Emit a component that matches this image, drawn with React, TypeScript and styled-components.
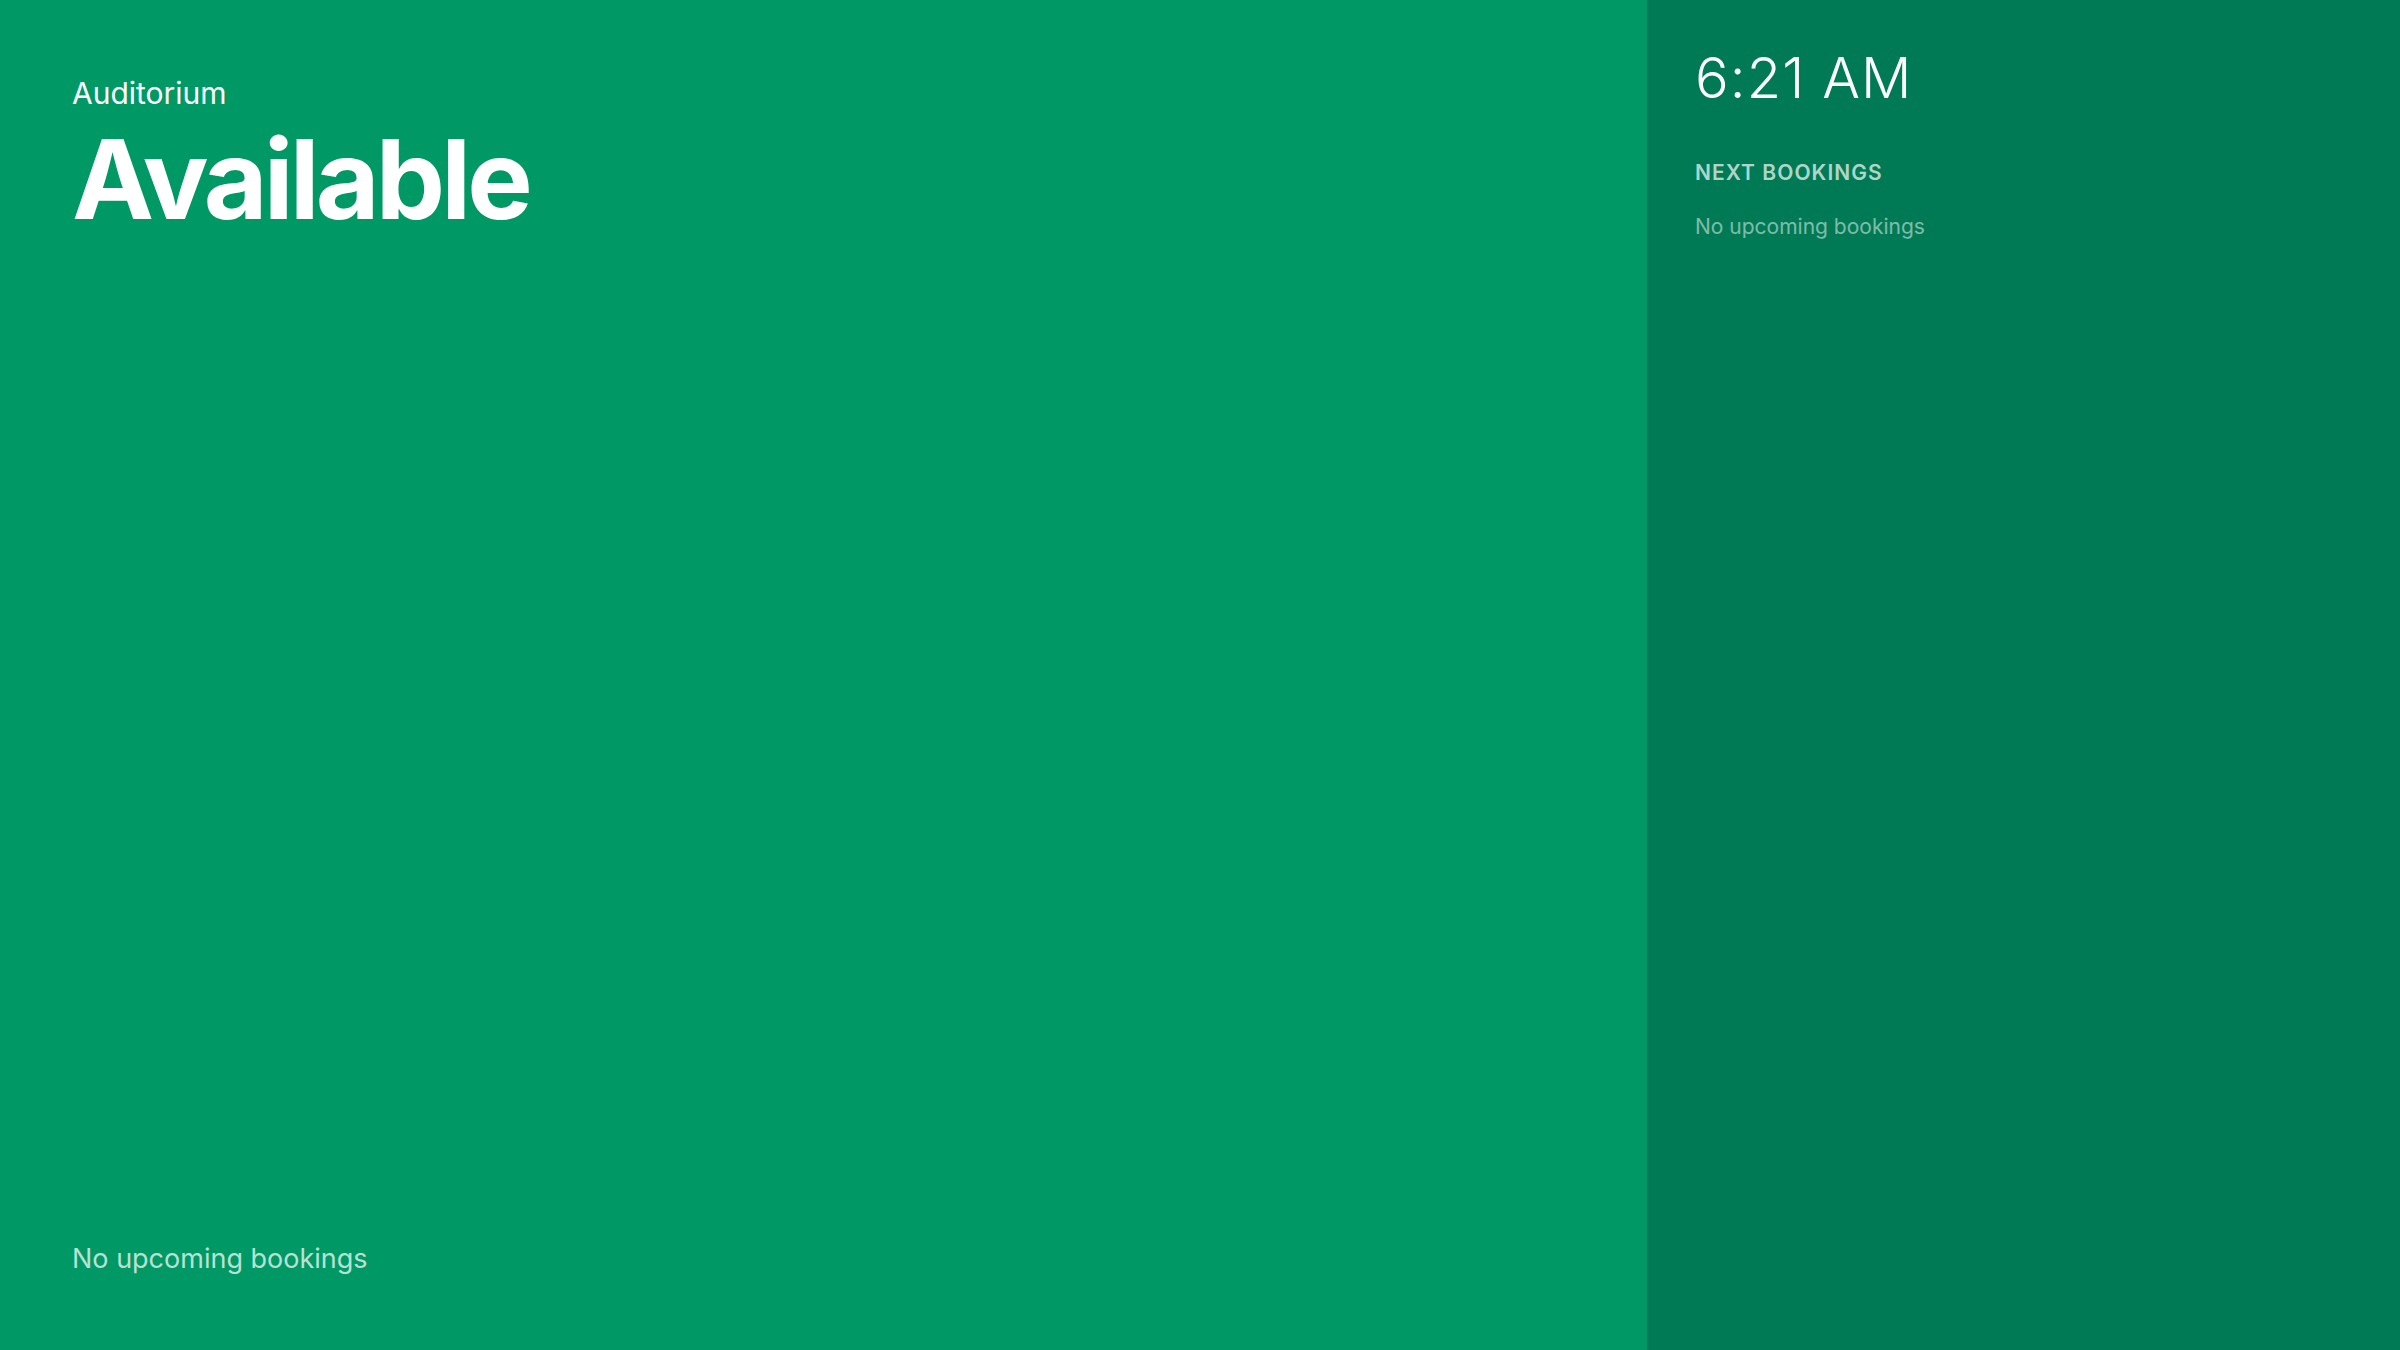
import styled, { createGlobalStyle } from 'styled-components'

const GlobalStyle = createGlobalStyle`
  html, body {
    margin: 0;
    padding: 0;
  }
  body {
    font-family: Inter, 'Noto Sans', sans-serif;
    -webkit-font-smoothing: antialiased;
  }
`

const Screen = styled.div`
  display: flex;
  width: 100vw;
  height: 100vh;
  overflow: hidden;
  color: #ffffff;
`

const StatusPanel = styled.main`
  flex: 1;
  display: flex;
  flex-direction: column;
  justify-content: space-between;
  padding: 72px 72px 72px;
  background-color: #009966;
`

const RoomName = styled.div`
  font-size: 30px;
  line-height: 1.4;
  font-weight: 400;
`

const StatusTitle = styled.h1`
  margin: 10px 0 0;
  font-size: 110px;
  line-height: 1;
  font-weight: 700;
  letter-spacing: -0.035em;
`

const Footer = styled.div`
  font-size: 27px;
  line-height: 1.4;
  color: rgba(255, 255, 255, 0.72);
`

const Sidebar = styled.aside`
  width: 753px;
  display: flex;
  flex-direction: column;
  padding: 45px 48px;
  background-color: #007a55;
  box-sizing: border-box;
`

const Clock = styled.div`
  font-size: 56px;
  line-height: 1.2;
  font-weight: 300;
  letter-spacing: 0.02em;
`

const SectionLabel = styled.div`
  margin-top: 46px;
  font-size: 21px;
  line-height: 1.4;
  font-weight: 600;
  letter-spacing: 0.05em;
  text-transform: uppercase;
  color: rgba(255, 255, 255, 0.7);
`

const EmptyNote = styled.div`
  margin-top: 24px;
  font-size: 21px;
  line-height: 1.4;
  color: rgba(255, 255, 255, 0.5);
`

export default function App() {
  return (
    <>
      <GlobalStyle />
      <Screen>
        <StatusPanel>
          <div>
            <RoomName>Auditorium</RoomName>
            <StatusTitle>Available</StatusTitle>
          </div>
          <Footer>No upcoming bookings</Footer>
        </StatusPanel>
        <Sidebar>
          <Clock>6:21 AM</Clock>
          <SectionLabel>Next bookings</SectionLabel>
          <EmptyNote>No upcoming bookings</EmptyNote>
        </Sidebar>
      </Screen>
    </>
  )
}
